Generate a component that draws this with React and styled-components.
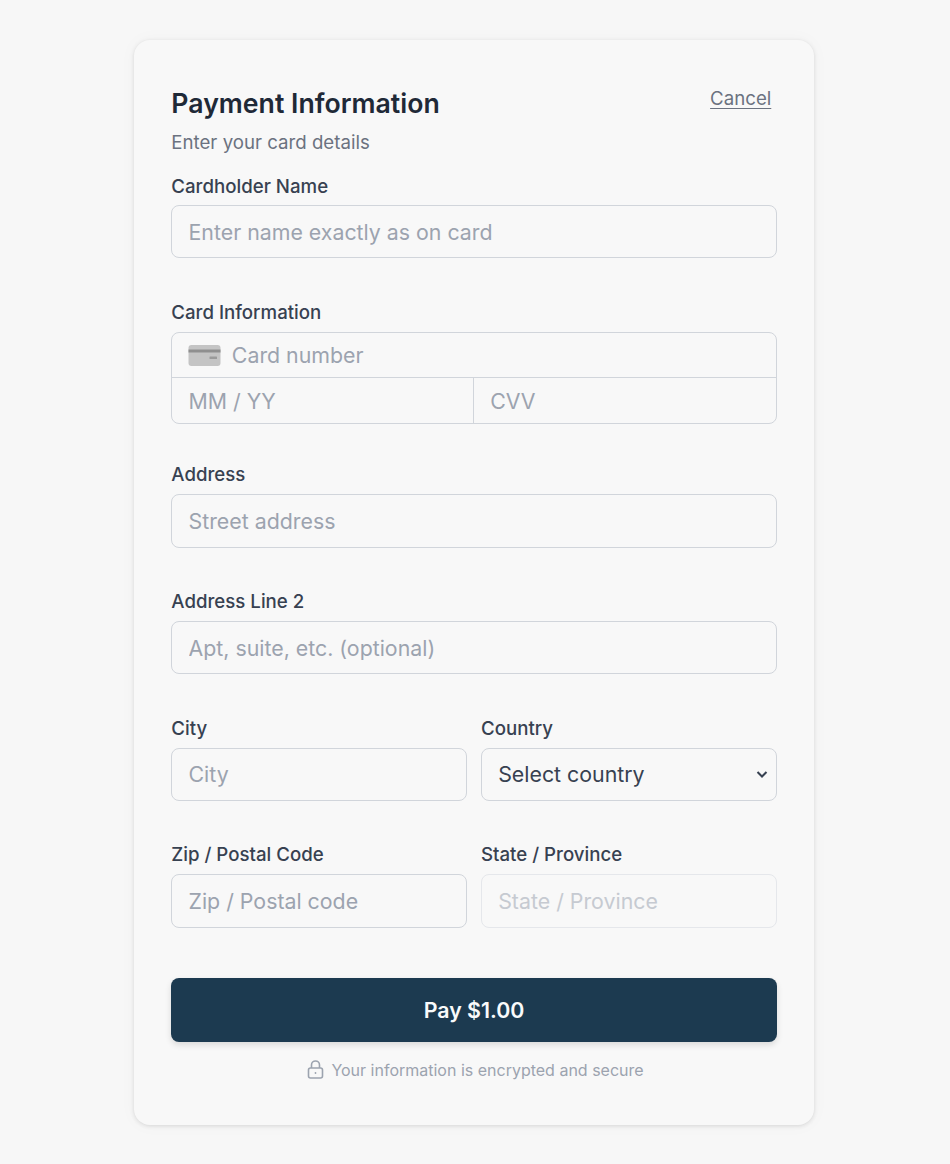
import React from 'react';
import styled, { createGlobalStyle } from 'styled-components';

const GlobalStyle = createGlobalStyle`
  * { box-sizing: border-box; }
  html, body { margin: 0; background: #f7f7f7; }
  body { font-family: Inter, "Liberation Sans", sans-serif; }
`;

const Page = styled.div`
  display: flex;
  padding: 40px 0 39px 134px;
`;

const Card = styled.form`
  width: 680px;
  height: 1085px;
  padding: 37px 37.33px;
  background: #f8f8f8;
  border-radius: 16px;
  box-shadow: 0 1px 4px rgba(0, 0, 0, 0.12), 0 0 18px rgba(0, 0, 0, 0.03);
`;

const Header = styled.div`
  display: flex;
  justify-content: space-between;
  align-items: flex-start;
`;

const Title = styled.h1`
  margin: 0;
  font-size: 26.67px;
  line-height: 53px;
  font-weight: 600;
  color: #1f2937;
`;

const Subtitle = styled.p`
  margin: 1px 0 0;
  font-size: 18.67px;
  line-height: 24px;
  color: #6b7280;
`;

const CancelLink = styled.a`
  margin: 10px 5.4px 0 0;
  font-size: 18.67px;
  line-height: 24px;
  color: #6b7280;
  text-decoration: underline;
  text-underline-offset: 3px;
`;

const Field = styled.div`
  margin-top: ${(p) => p.$top || 0}px;
`;

const Label = styled.label`
  display: block;
  margin-bottom: ${(p) => p.$gap || 7}px;
  font-size: 18.67px;
  line-height: 24px;
  font-weight: 500;
  color: #374151;
`;

const Input = styled.input`
  display: block;
  width: 100%;
  height: 53.33px;
  padding: 0 16.2px;
  font: inherit;
  font-size: 21.33px;
  color: #374151;
  background: transparent;
  border: 1px solid ${(p) => (p.disabled ? '#e5e7eb' : '#d1d5db')};
  border-radius: 8px;
  outline: none;

  &::placeholder {
    color: ${(p) => (p.disabled ? '#c6cad1' : '#9ca3af')};
    opacity: 1;
  }
`;

const SelectWrap = styled.div`
  position: relative;
`;

const Select = styled.select`
  display: block;
  width: 100%;
  height: 53.33px;
  padding: 0 16.2px;
  font: inherit;
  font-size: 21.33px;
  color: #374151;
  background: transparent;
  border: 1px solid #d1d5db;
  border-radius: 8px;
  outline: none;
  appearance: none;
`;

const Chevron = styled.svg`
  position: absolute;
  top: 22px;
  right: 8.5px;
  width: 12px;
  height: 9px;
  pointer-events: none;
`;

const CardGroup = styled.div`
  border: 1px solid #d1d5db;
  border-radius: 8px;
  overflow: hidden;
`;

const CardNumberRow = styled.div`
  display: flex;
  align-items: center;
  gap: 10.5px;
  height: 45px;
  padding-left: 16px;
  border-bottom: 1px solid #d1d5db;
`;

const CardSplitRow = styled.div`
  display: grid;
  grid-template-columns: 300.7px 1fr;
  height: 45px;
`;

const GroupInput = styled.input`
  flex: 1;
  min-width: 0;
  width: 100%;
  height: 100%;
  padding: 0 ${(p) => (p.$bare ? 0 : 16.2)}px;
  font: inherit;
  font-size: 21.33px;
  background: transparent;
  border: 0;
  border-left: ${(p) => (p.$divided ? '1px solid #d1d5db' : '0')};
  outline: none;

  &::placeholder {
    color: #9ca3af;
    opacity: 1;
  }
`;

const TwoCols = styled.div`
  display: grid;
  grid-template-columns: 1fr 1fr;
  column-gap: 14px;
  margin-top: ${(p) => p.$top || 0}px;
`;

const PayButton = styled.button`
  display: block;
  width: 100%;
  height: 64px;
  margin-top: 50px;
  font: inherit;
  font-size: 21.33px;
  font-weight: 600;
  color: #f9fafb;
  background: #1c3a50;
  border: 0;
  border-radius: 8px;
  box-shadow: 0 3px 6px rgba(0, 0, 0, 0.12);
`;

const SecureNote = styled.div`
  display: flex;
  justify-content: center;
  align-items: center;
  gap: 7px;
  margin-top: 16px;
  padding-left: 3px;
  font-size: 16px;
  line-height: 24px;
  color: #9ca3af;
`;

function CardIcon() {
  return (
    <svg width="33" height="21" viewBox="0 0 33 21" aria-hidden="true">
      <rect x="0.5" y="0" width="32" height="21" rx="3" fill="#c4c4c4" />
      <rect x="0.5" y="4.5" width="32" height="3" fill="#8f8f8f" />
      <rect x="21.5" y="11.5" width="7.5" height="2.6" rx="0.6" fill="#9a9a9a" />
    </svg>
  );
}

function LockIcon() {
  return (
    <svg width="17" height="19" viewBox="0 0 17 19" fill="none" stroke="#9ca3af" strokeWidth="1.6" aria-hidden="true">
      <rect x="1.5" y="8" width="14" height="10" rx="2" />
      <path d="M4.5 8V5a4 4 0 0 1 8 0v3" />
      <circle cx="8.5" cy="13" r="0.9" fill="#9ca3af" stroke="none" />
    </svg>
  );
}

export default function App() {
  return (
    <Page>
      <GlobalStyle />
      <Card>
        <Header>
          <Title>Payment Information</Title>
          <CancelLink href="#">Cancel</CancelLink>
        </Header>
        <Subtitle>Enter your card details</Subtitle>

        <Field $top={20}>
          <Label $gap={6}>Cardholder Name</Label>
          <Input placeholder="Enter name exactly as on card" />
        </Field>

        <Field $top={43}>
          <Label>Card Information</Label>
          <CardGroup>
            <CardNumberRow>
              <CardIcon />
              <GroupInput $bare placeholder="Card number" />
            </CardNumberRow>
            <CardSplitRow>
              <GroupInput placeholder="MM / YY" />
              <GroupInput $divided placeholder="CVV" />
            </CardSplitRow>
          </CardGroup>
        </Field>

        <Field $top={39}>
          <Label>Address</Label>
          <Input placeholder="Street address" />
        </Field>

        <Field $top={42.4}>
          <Label>Address Line 2</Label>
          <Input placeholder="Apt, suite, etc. (optional)" />
        </Field>

        <TwoCols $top={42.2}>
          <Field>
            <Label>City</Label>
            <Input placeholder="City" />
          </Field>
          <Field>
            <Label>Country</Label>
            <SelectWrap>
              <Select defaultValue="">
                <option value="">Select country</option>
              </Select>
              <Chevron viewBox="0 0 12 9" fill="none" stroke="#374151" strokeWidth="2" aria-hidden="true">
                <path d="M1.5 2 6 6.5 10.5 2" />
              </Chevron>
            </SelectWrap>
          </Field>
        </TwoCols>

        <TwoCols $top={42.4}>
          <Field>
            <Label>Zip / Postal Code</Label>
            <Input placeholder="Zip / Postal code" />
          </Field>
          <Field>
            <Label>State / Province</Label>
            <Input disabled placeholder="State / Province" />
          </Field>
        </TwoCols>

        <PayButton type="button">Pay $1.00</PayButton>
        <SecureNote>
          <LockIcon />
          Your information is encrypted and secure
        </SecureNote>
      </Card>
    </Page>
  );
}
